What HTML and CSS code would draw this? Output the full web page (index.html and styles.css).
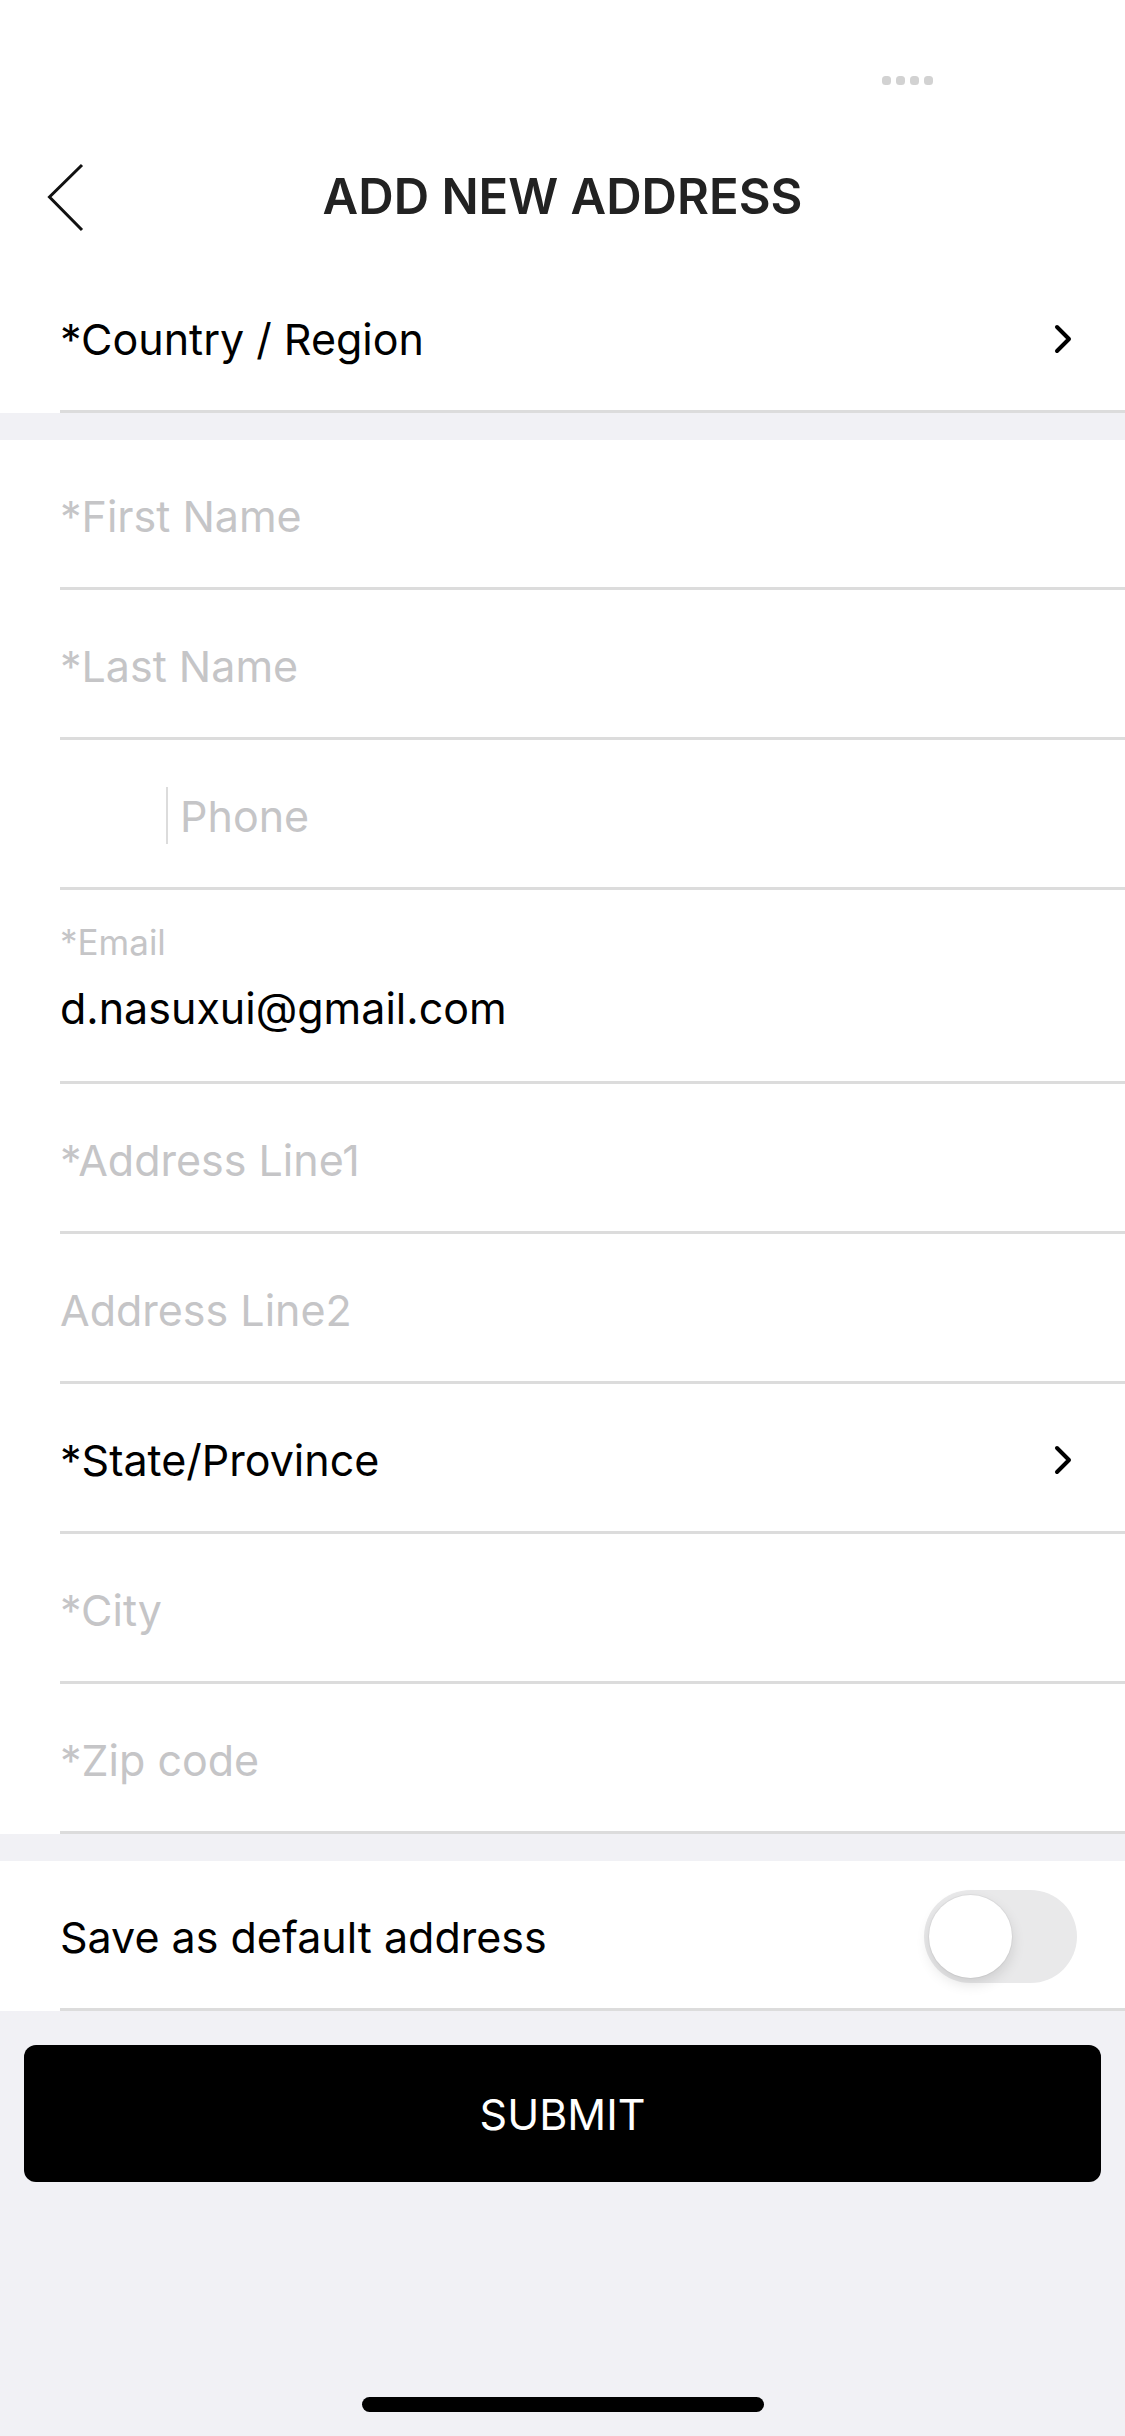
FILE: index.html
```html
<!DOCTYPE html>
<html lang="en">
<head>
<meta charset="utf-8">
<title>Add New Address</title>
<link rel="stylesheet" href="styles.css">
</head>
<body>
<div class="page">
  <div class="status">
    <div class="dots"><span></span><span></span><span></span><span></span></div>
  </div>
  <header class="nav">
    <div class="nav-left">
      <svg class="back" width="40" height="72" viewBox="0 0 40 72"><polyline points="36,3 3.5,35 36,68" fill="none" stroke="#111" stroke-width="3"/></svg>
    </div>
    <h1 class="title">ADD NEW ADDRESS</h1>
    <div class="nav-right"></div>
  </header>

  <section class="group">
    <div class="row"><div class="row-inner">
      <span class="value">*Country / Region</span>
      <svg class="chev" width="20" height="32" viewBox="0 0 20 32"><polyline points="4,4 16,16 4,28" fill="none" stroke="#000" stroke-width="4" stroke-linecap="round" stroke-linejoin="round"/></svg>
    </div></div>
  </section>

  <div class="gap"></div>

  <section class="group">
    <div class="row"><div class="row-inner"><span class="ph">*First Name</span></div></div>
    <div class="row"><div class="row-inner"><span class="ph">*Last Name</span></div></div>
    <div class="row"><div class="row-inner phone">
      <span class="code"></span><span class="vbar"></span><span class="ph">Phone</span>
    </div></div>
    <div class="row"><div class="row-inner email">
      <span class="label">*Email</span>
      <span class="value">d.nasuxui@gmail.com</span>
    </div></div>
    <div class="row"><div class="row-inner"><span class="ph">*Address Line1</span></div></div>
    <div class="row"><div class="row-inner"><span class="ph">Address Line2</span></div></div>
    <div class="row"><div class="row-inner">
      <span class="value">*State/Province</span>
      <svg class="chev" width="20" height="32" viewBox="0 0 20 32"><polyline points="4,4 16,16 4,28" fill="none" stroke="#000" stroke-width="4" stroke-linecap="round" stroke-linejoin="round"/></svg>
    </div></div>
    <div class="row"><div class="row-inner"><span class="ph">*City</span></div></div>
    <div class="row"><div class="row-inner"><span class="ph">*Zip code</span></div></div>
  </section>

  <div class="gap"></div>

  <section class="group">
    <div class="row"><div class="row-inner toggle-row">
      <span class="value">Save as default address</span>
      <span class="switch"><span class="knob"></span></span>
    </div></div>
  </section>

  <div class="footer">
    <button class="submit">SUBMIT</button>
    <div class="home"></div>
  </div>
</div>
</body>
</html>
```

FILE: styles.css
```css
* { box-sizing: border-box; }
html, body { margin: 0; padding: 0; }
body {
  width: 1125px;
  min-height: 2436px;
  background: #f1f1f5;
  font-family: "Inter", "Liberation Sans", sans-serif;
  -webkit-font-smoothing: antialiased;
}
.page {
  display: flex;
  flex-direction: column;
  min-height: 2436px;
}
.status {
  background: #fff;
  height: 132px;
  display: flex;
  justify-content: flex-end;
  align-items: flex-start;
  padding: 76px 192px 0 0;
}
.dots { display: flex; gap: 5px; }
.dots span {
  width: 9px; height: 9px; border-radius: 3.5px; background: #d2d2d2;
}
.nav {
  background: #fff;
  height: 131px;
  display: grid;
  grid-template-columns: 1fr auto 1fr;
  align-items: center;
}
.nav-left { padding-left: 46px; display: flex; align-items: center; }
.back { display: block; }
.title {
  margin: 0;
  font-size: 49px;
  font-weight: 600;
  color: #222;
  line-height: 1.2;
}
.group { background: #fff; }
.gap { height: 27px; }
.row { padding-left: 60px; }
.row-inner {
  height: 150px;
  border-bottom: 3px solid #dcdcdc;
  display: flex;
  align-items: center;
  justify-content: space-between;
  padding-right: 52px;
  padding-top: 4px;
}
.ph, .value {
  font-size: 43px;
  line-height: 52px;
}
.ph { color: #c5c5c7; }
.value { color: #000; }
.phone { justify-content: flex-start; }
.code { width: 106px; flex: none; }
.vbar { width: 2px; height: 57px; background: #dcdcdc; flex: none; margin-right: 12px; }
.email {
  height: 194px;
  flex-direction: column;
  align-items: flex-start;
  justify-content: flex-start;
  padding-top: 31px;
}
.label {
  font-size: 35px;
  line-height: 43px;
  color: #c5c5c7;
  margin-bottom: 18px;
}
.toggle-row { padding-right: 48px; }
.switch {
  width: 153px; height: 93px; border-radius: 47px;
  background: #e9e9ea;
  display: flex; align-items: center; padding-left: 5px;
}
.knob {
  width: 83px; height: 83px; border-radius: 50%;
  background: #fff;
  box-shadow: 0 6px 14px rgba(0,0,0,0.12), 0 0 0 1px rgba(0,0,0,0.04);
}
.footer {
  flex: 1;
  display: flex;
  flex-direction: column;
  align-items: center;
  padding: 34px 24px 24px;
}
.submit {
  width: 100%;
  height: 137px;
  border: none;
  border-radius: 12px;
  background: #000;
  color: #fff;
  font-family: inherit;
  font-size: 43px;
  font-weight: 400;
}
.home {
  margin-top: auto;
  width: 402px; height: 15px; border-radius: 8px; background: #000;
}
```
